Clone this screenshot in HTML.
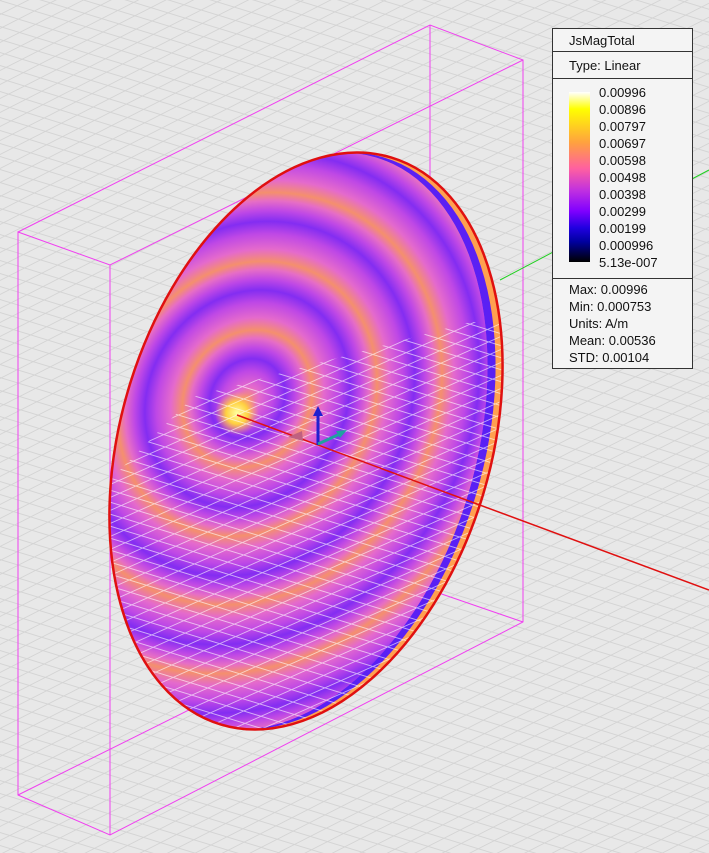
<!DOCTYPE html>
<html><head><style>
html,body{margin:0;padding:0;width:709px;height:853px;overflow:hidden;background:#e8e8e8}
#leg{position:absolute;left:552px;top:28px;width:139px;height:339px;background:#f4f4f4;border:1px solid #333;font-family:"Liberation Sans",sans-serif;font-size:13px;color:#111}
.r{position:absolute;left:0;width:139px;border-bottom:1px solid #333}
</style></head><body>
<svg width="709" height="853" style="position:absolute;left:0;top:0">
<defs>
<pattern id="ga" width="709" height="13" patternUnits="userSpaceOnUse" patternTransform="skewY(17)">
<rect width="709" height="1" y="0" fill="#d4d4d4"/></pattern>
<pattern id="gb" width="709" height="14" patternUnits="userSpaceOnUse" patternTransform="skewY(-27)">
<rect width="709" height="1" y="0" fill="#d4d4d4"/></pattern>
<pattern id="ma" width="709" height="12" patternUnits="userSpaceOnUse" patternTransform="skewY(17)">
<rect width="709" height="1" y="0" fill="#ffffff"/></pattern>
<pattern id="mb" width="709" height="13" patternUnits="userSpaceOnUse" patternTransform="skewY(-24)">
<rect width="709" height="1" y="0" fill="#ffffff"/></pattern>
<radialGradient id="rg" gradientUnits="userSpaceOnUse" cx="237" cy="413" r="62" spreadMethod="repeat" gradientTransform="translate(237 413) rotate(16) scale(1 1.15) translate(-237 -413)">
<stop offset="0" stop-color="#ff9c58"/>
<stop offset="0.18" stop-color="#ec70c8"/>
<stop offset="0.4" stop-color="#c048e6"/>
<stop offset="0.58" stop-color="#7a28f4"/>
<stop offset="0.74" stop-color="#c048e6"/>
<stop offset="0.88" stop-color="#ee74c0"/>
<stop offset="1" stop-color="#ff9c58"/>
</radialGradient>
<radialGradient id="hot" cx="237" cy="413" r="22" gradientUnits="userSpaceOnUse">
<stop offset="0" stop-color="#ffffa0"/><stop offset="0.5" stop-color="#ffd040"/><stop offset="1" stop-color="#ffa060" stop-opacity="0"/>
</radialGradient>
<clipPath id="cp"><ellipse cx="306" cy="441" rx="185" ry="296" transform="rotate(16.7 306 441)"/></clipPath>
<clipPath id="mc"><polygon points="110,480 193,397 470,322 520,322 520,760 100,760"/></clipPath>
</defs>
<rect width="709" height="853" fill="url(#ga)"/>
<rect width="709" height="853" fill="url(#gb)"/>
<g stroke="#f040f0" stroke-width="1" fill="none">
<polyline points="18,232 430,25 523,60 523,622 110,835 18,795 18,232 110,265 523,60"/>
<line x1="110" y1="265" x2="110" y2="835"/>
<line x1="430" y1="25" x2="430" y2="590"/>
<line x1="430" y1="590" x2="523" y2="622"/>
<line x1="18" y1="795" x2="430" y2="590"/>
</g>
<line x1="500" y1="280" x2="709" y2="170" stroke="#20d020" stroke-width="1"/>
<g clip-path="url(#cp)">
<rect width="709" height="853" fill="#ffa050"/>
<ellipse cx="299" cy="441" rx="185" ry="296" transform="rotate(16.7 299 441)" fill="#5a20f4"/>
<ellipse cx="291" cy="441" rx="185" ry="296" transform="rotate(16.7 291 441)" fill="#b848e4"/>
<ellipse cx="291" cy="441" rx="185" ry="296" transform="rotate(16.7 291 441)" fill="url(#rg)" opacity="0.85"/>
<circle cx="237" cy="413" r="22" fill="url(#hot)"/>
<g clip-path="url(#mc)" opacity="0.6">
<rect width="709" height="853" fill="url(#ma)"/>
<rect width="709" height="853" fill="url(#mb)"/>
</g>
</g>
<ellipse cx="306" cy="441" rx="185" ry="296" transform="rotate(16.7 306 441)" fill="none" stroke="#e01010" stroke-width="2.5"/>
<line x1="237" y1="415" x2="709" y2="590" stroke="#e01010" stroke-width="1.5"/>
<line x1="318" y1="445" x2="318" y2="414" stroke="#2020d0" stroke-width="3"/>
<polygon points="313,416 318,406 323,416" fill="#2020d0"/>
<line x1="318" y1="444" x2="340" y2="434" stroke="#20a0a0" stroke-width="3"/>
<polygon points="336,431 347,430 340,438" fill="#20a0a0"/>
<polygon points="288,437 302,431 303,441" fill="#c06080"/>
</svg>
<div id="leg">
<div class="r" style="top:0;height:23px;line-height:23px;padding-left:16px;box-sizing:border-box">JsMagTotal</div>
<div class="r" style="top:24px;height:26px;line-height:26px;padding-left:16px;box-sizing:border-box">Type: Linear</div>
<div class="r" style="top:51px;height:198px">
<div style="position:absolute;left:16px;top:12px;width:21px;height:170px;background:linear-gradient(#ffffff,#ffff00 10%,#ffa040 30%,#ff60a0 45%,#c030e0 58%,#8000ff 70%,#2000e0 80%,#0000a0 88%,#000000)"></div>
<div style="position:absolute;left:46px;top:4px;line-height:17px">0.00996<br>0.00896<br>0.00797<br>0.00697<br>0.00598<br>0.00498<br>0.00398<br>0.00299<br>0.00199<br>0.000996<br>5.13e-007</div>
</div>
<div style="position:absolute;left:16px;top:252px;line-height:17px">Max: 0.00996<br>Min: 0.000753<br>Units: A/m<br>Mean: 0.00536<br>STD: 0.00104</div>
</div>
</body></html>
